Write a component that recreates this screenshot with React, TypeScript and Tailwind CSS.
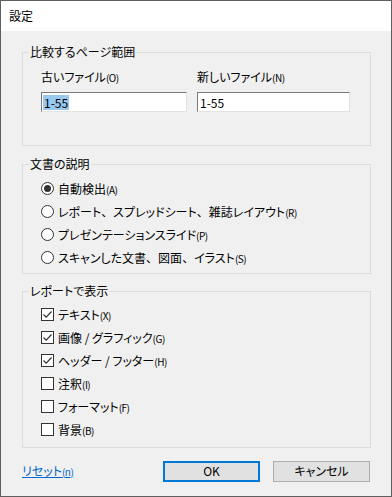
const font = "[font-family:'Noto_Sans_CJK_JP','Noto_Sans',sans-serif] [font-feature-settings:'palt']";

function Acc({ k }: { k: string }) {
  return <span className="text-[10px] tracking-[-0.5px]">({k})</span>;
}

// full-width comma, as in the Windows dialog font
function Ten() {
  return <span className="[font-feature-settings:normal]">、</span>;
}

function Group({ title, className, children }: { title: string; className: string; children: React.ReactNode }) {
  return (
    <div className={`relative border border-[#dcdcdc] ${className}`}>
      <span className="absolute left-[6px] -top-[10px] bg-[#f0f0f0] px-[1px] text-[12px] leading-[18px] text-black">{title}</span>
      {children}
    </div>
  );
}

function Radio({ on, children, k }: { on?: boolean; children: React.ReactNode; k: string }) {
  return (
    <div className="flex h-[23px] items-center">
      <span className="flex h-[13px] w-[13px] items-center justify-center rounded-full border border-[#333] bg-white">
        {on && <span className="h-[7px] w-[7px] rounded-full bg-[#333]" />}
      </span>
      <span className="ml-[4px] text-[12px] text-black">
        {children}
        <Acc k={k} />
      </span>
    </div>
  );
}

function Check({ on, label, k }: { on?: boolean; label: string; k: string }) {
  return (
    <div className="flex h-[23px] items-center">
      <span className="flex h-[13px] w-[13px] items-center justify-center border border-[#333] bg-white">
        {on && (
          <svg width="11" height="11" viewBox="0 0 11 11">
            <path d="M1.5 5.5 L4.2 8.2 L9.5 2.5" fill="none" stroke="#333" strokeWidth="1.2" />
          </svg>
        )}
      </span>
      <span className="ml-[4px] text-[12px] text-black">
        {label}
        <Acc k={k} />
      </span>
    </div>
  );
}

export default function App() {
  return (
    <div className={`${font} flex h-[497px] w-[392px] flex-col border border-[#5f5f5f] bg-[#f0f0f0]`}>
      <div className="flex h-[30px] items-center bg-white pl-[8px] text-[12px] text-black">設定</div>

      <div className="flex flex-col px-[21px]">
        <Group title="比較するページ範囲" className="mt-[21px] h-[94px] w-[349px]">
          <div className="flex pl-[18px] pt-[15px]">
            <div className="flex w-[156px] flex-col">
              <span className="h-[18px] text-[12px] leading-[18px] text-black">
                古いファイル<Acc k="O" />
              </span>
              <div className="mt-[6px] flex h-[20px] w-[146px] items-center border border-[#7a7a7a] border-b-[#e3e3e3] border-r-[#e3e3e3] bg-white pl-[1px]">
                <span className="bg-[#99c9ef] px-[1px] text-[12px] leading-[15px] text-black">1-55</span>
              </div>
            </div>
            <div className="flex flex-col">
              <span className="h-[18px] text-[12px] leading-[18px] text-black">
                新しいファイル<Acc k="N" />
              </span>
              <div className="mt-[6px] flex h-[20px] w-[153px] items-center border border-[#7a7a7a] border-b-[#e3e3e3] border-r-[#e3e3e3] bg-white pl-[2px]">
                <span className="text-[12px] leading-[15px] text-black">1-55</span>
              </div>
            </div>
          </div>
        </Group>

        <Group title="文書の説明" className="mt-[18px] h-[110px] w-[349px]">
          <div className="flex flex-col pl-[18px] pt-[12px]">
            <Radio on k="A">自動検出</Radio>
            <Radio k="R">
              レポート<Ten />スプレッドシート<Ten />雑誌レイアウト
            </Radio>
            <Radio k="P">プレゼンテーションスライド</Radio>
            <Radio k="S">
              スキャンした文書<Ten />図面<Ten />イラスト
            </Radio>
          </div>
        </Group>

        <Group title="レポートで表示" className="mt-[17px] h-[157px] w-[349px]">
          <div className="flex flex-col pl-[18px] pt-[11px]">
            <Check on label="テキスト" k="X" />
            <Check on label="画像 / グラフィック" k="G" />
            <Check on label="ヘッダー / フッター" k="H" />
            <Check label="注釈" k="I" />
            <Check label="フォーマット" k="F" />
            <Check label="背景" k="B" />
          </div>
        </Group>

        <div className="mt-[13px] flex h-[20px] w-[348px] items-center">
          <span className="text-[12px] text-[#0066cc] underline">
            リセット<Acc k="n" />
          </span>
          <div className="ml-auto flex gap-[13px]">
            <button className="flex h-[21px] w-[97px] items-center justify-center border-2 border-[#0078d7] bg-[#e1e1e1] text-[12px] text-black">
              OK
            </button>
            <button className="flex h-[21px] w-[97px] items-center justify-center border border-[#adadad] bg-[#e1e1e1] text-[12px] text-black">
              キャンセル
            </button>
          </div>
        </div>
      </div>
    </div>
  );
}
